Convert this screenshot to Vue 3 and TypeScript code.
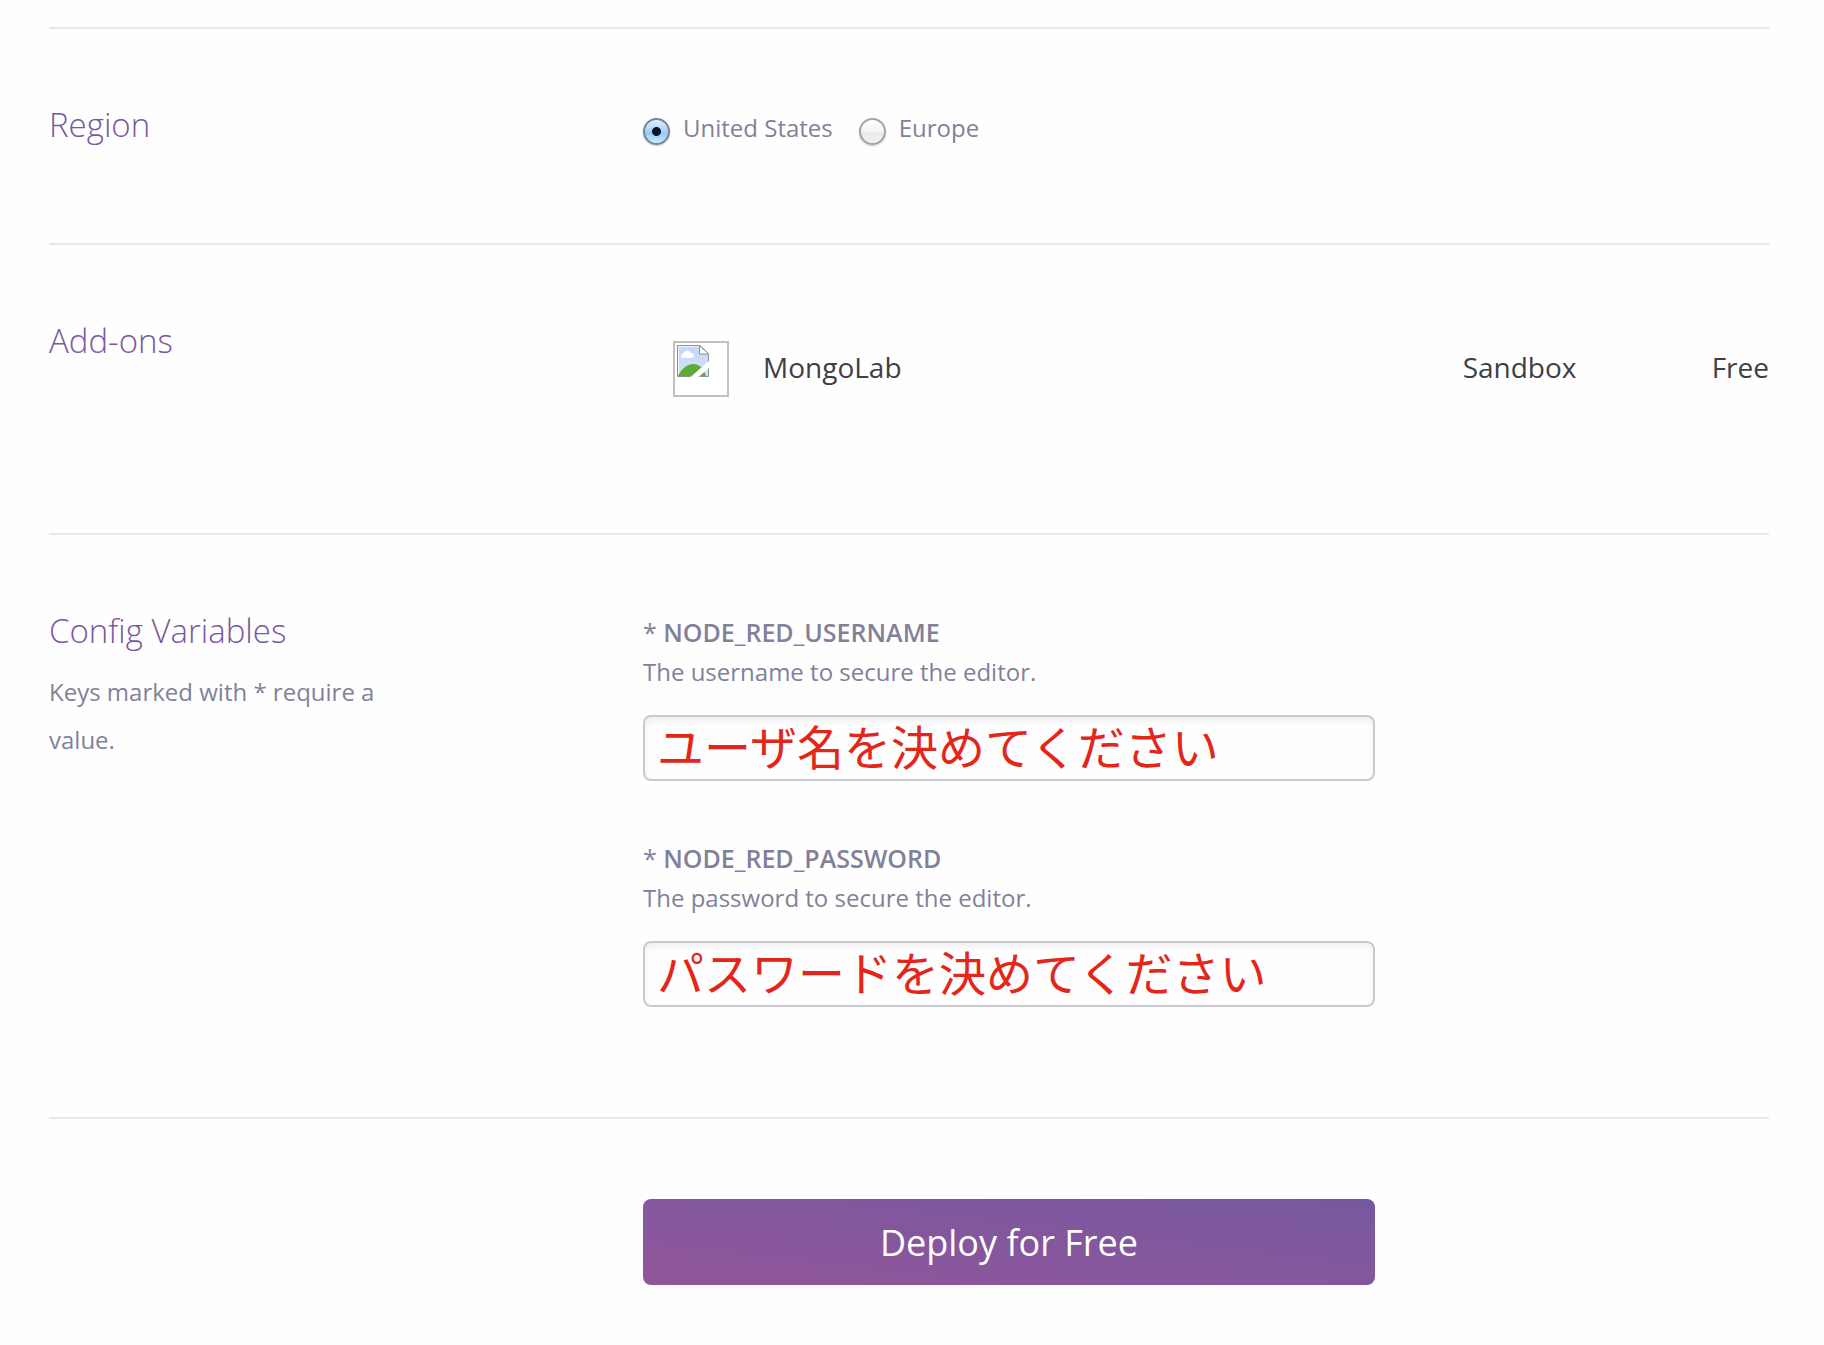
<script setup lang="ts">
import { ref } from 'vue'

interface Addon {
  name: string
  plan: string
  price: string
}

interface ConfigVar {
  key: string
  description: string
  value: string
}

const region = ref('us')
const regions = [
  { id: 'us', label: 'United States' },
  { id: 'eu', label: 'Europe' },
]

const addons: Addon[] = [{ name: 'MongoLab', plan: 'Sandbox', price: 'Free' }]

const configVars = ref<ConfigVar[]>([
  {
    key: 'NODE_RED_USERNAME',
    description: 'The username to secure the editor.',
    value: 'ユーザ名を決めてください',
  },
  {
    key: 'NODE_RED_PASSWORD',
    description: 'The password to secure the editor.',
    value: 'パスワードを決めてください',
  },
])
</script>

<template>
  <form class="setup" @submit.prevent>
    <section class="row">
      <h2 id="region-title" class="title">Region</h2>
      <div class="regions" role="radiogroup" aria-labelledby="region-title">
        <label v-for="r in regions" :key="r.id" class="region">
          <input v-model="region" class="radio" type="radio" name="region" :value="r.id" />
          <span>{{ r.label }}</span>
        </label>
      </div>
    </section>

    <section class="row">
      <h2 class="title">Add-ons</h2>
      <table class="addons">
        <tbody>
          <tr v-for="a in addons" :key="a.name">
            <td class="addon-icon">
              <svg class="icon" width="56" height="56" viewBox="0 0 56 56" aria-hidden="true">
                <defs>
                  <linearGradient id="sky" x1="0" y1="0" x2="0" y2="1">
                    <stop offset="0" stop-color="#c3d8f8" />
                    <stop offset="1" stop-color="#d5e1f8" />
                  </linearGradient>
                </defs>
                <rect x="1" y="1" width="54" height="54" fill="#fff" stroke="#c0c0c0" stroke-width="2" />
                <path d="M4.500 4.500H27L35.500 13V35.500H4.500Z" fill="url(#sky)" stroke="#8e9097" />
                <path d="M5.500 35V5.500H26" fill="none" stroke="#eef4fd" />
                <path d="M9 17c-2-1-1-4 1-4 1-4 7-4 8-1 3 0 4 4 1 5Z" fill="#fff" />
                <path d="M5 35c3-7 9-12 15-12 7 0 11 5 13 12Z" fill="#5bad38" />
                <path d="M17 36.500 37 19V26L25 36.500Z" fill="#fff" />
                <path d="M26.500 4.500V13H35.500Z" fill="#fff" stroke="#8e9097" />
              </svg>
            </td>
            <td class="addon-name">{{ a.name }}</td>
            <td class="addon-plan">{{ a.plan }}</td>
            <td class="addon-price">{{ a.price }}</td>
          </tr>
        </tbody>
      </table>
    </section>

    <section class="row">
      <div>
        <h2 class="title">Config Variables</h2>
        <p class="hint">Keys marked with * require a value.</p>
      </div>
      <div class="fields">
        <div v-for="v in configVars" :key="v.key" class="field">
          <label class="key" :for="v.key"><span class="star">*</span> {{ v.key }}</label>
          <p :id="`${v.key}-help`" class="description">{{ v.description }}</p>
          <input :id="v.key" v-model="v.value" class="input" type="text" :aria-describedby="`${v.key}-help`" />
        </div>
      </div>
    </section>

    <section class="row">
      <button class="deploy" type="submit">Deploy for Free</button>
    </section>
  </form>
</template>

<style>
body {
  background: #fefefe;
}
</style>

<style scoped>
.setup {
  margin: 27px 55px 0 49px;
  font-family: 'Open Sans', 'Noto Sans CJK JP', sans-serif;
  font-size: 24px;
  line-height: 40px;
  color: #82819a;
}

.row {
  display: grid;
  grid-template-columns: 594px 1fr;
  align-items: start;
  padding: 72px 0;
  border-top: 2px solid #e6e6ec;
}

.title {
  margin: 0;
  font-size: 33px;
  font-weight: 300;
  line-height: 48px;
  color: #79589f;
}

.regions {
  display: flex;
  gap: 26px;
  padding: 7px 0 23px;
}

.region {
  display: flex;
  align-items: center;
  gap: 13px;
}

.radio {
  appearance: none;
  box-sizing: border-box;
  width: 27px;
  height: 27px;
  margin: 6px 0 0;
  border: 2px solid #a3a3a3;
  border-radius: 50%;
  background: linear-gradient(#ffffff 0%, #f4f4f4 50%, #e9e9e9 51%, #f0f0f0 100%);
  box-shadow: 0 1px 2px rgba(0, 0, 0, 0.2);
}

.radio:checked {
  border-color: #7c7f9c;
  background:
    radial-gradient(circle, #06142b 0 4px, transparent 5px),
    linear-gradient(#dcecfd 0%, #a9d0f7 50%, #8fc6f7 51%, #c2ecff 100%);
}

.addons {
  width: 100%;
  margin: 24px 0 64px;
  border-collapse: collapse;
  font-size: 28px;
  color: #3f3f44;
}

.addons td {
  box-sizing: border-box;
  height: 56px;
  padding: 0 0 5px;
}

.addons .addon-icon {
  width: 120px;
  padding: 0;
}

.icon {
  display: block;
  margin-left: 30px;
}

.addon-plan {
  width: 249px;
}

.addon-price {
  width: 56px;
  text-align: right;
}

.hint {
  max-width: 340px;
  margin: 13px 0 0;
  line-height: 48px;
}

.fields {
  padding: 5px 0 38px;
}

.field {
  width: 65%;
}

.field + .field {
  margin-top: 57px;
}

.key {
  display: block;
  font-size: 25px;
  font-weight: 600;
}

.star {
  font-weight: 400;
}

.description {
  margin: 0;
}

.input {
  box-sizing: border-box;
  display: block;
  width: 100%;
  height: 66px;
  margin-top: 23px;
  padding: 0 12px 8px;
  border: 2px solid #c9c9d2;
  border-radius: 8px;
  background: #fefefe;
  box-shadow: inset 0 4px 6px rgba(0, 0, 0, 0.06);
  font-family: 'Noto Sans CJK JP', sans-serif;
  font-size: 47px;
  font-weight: 400;
  color: #e32619;
}

.deploy {
  grid-column: 2;
  width: 65%;
  height: 86px;
  margin-top: 8px;
  padding: 0;
  border: 0;
  border-radius: 8px;
  background: linear-gradient(to top right, #92569a, #7658a0);
  font-family: inherit;
  font-size: 36px;
  color: #fff;
}
</style>
